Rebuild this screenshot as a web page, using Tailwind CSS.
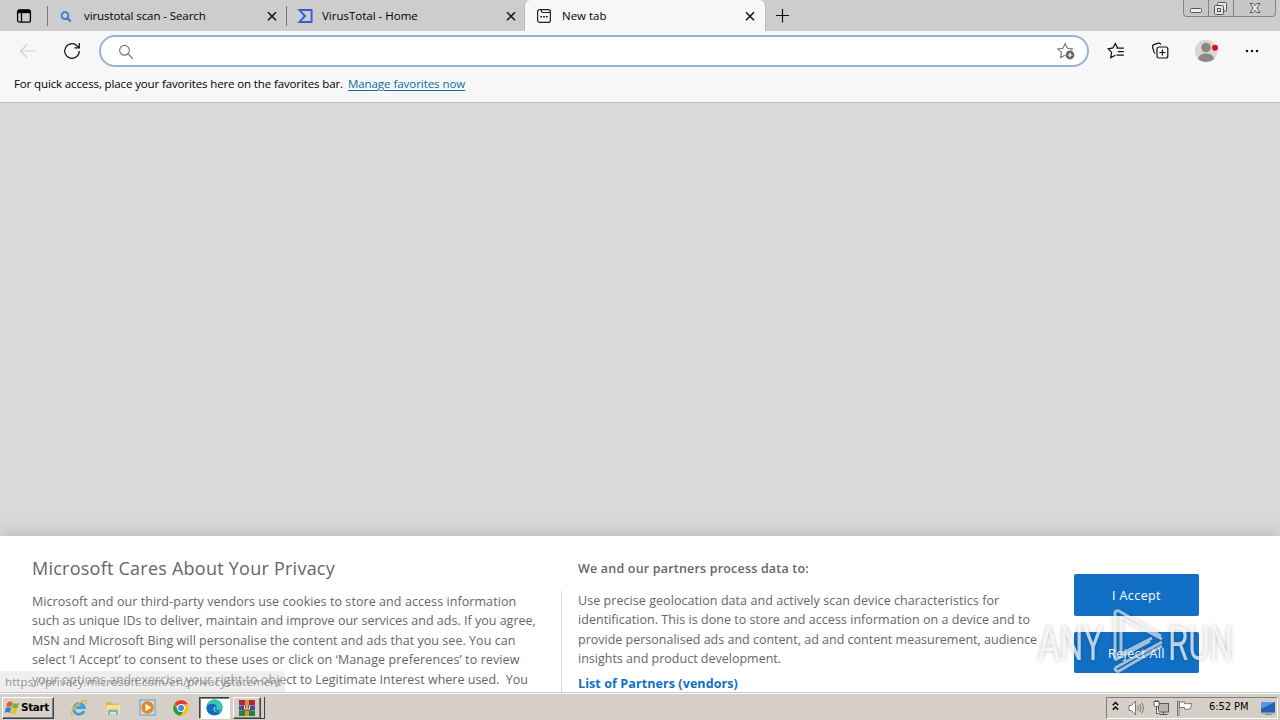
<!DOCTYPE html>
<html lang="en">
<head>
  <meta charset="UTF-8" />
  <meta name="viewport" content="width=device-width, initial-scale=1.0" />
  <title>New tab</title>
  <script src="https://cdn.jsdelivr.net/npm/@tailwindcss/browser@4"></script>
</head>
<body class="w-[1280px] h-[720px] overflow-hidden bg-[#d9d9d9] text-black font-['Open_Sans','Noto_Sans',sans-serif] flex flex-col relative">

  <!-- Tab strip -->
  <header class="h-[31px] shrink-0 bg-[#cdcdcd] flex text-[11.5px] leading-[31px] whitespace-nowrap">
    <div class="w-[47px] pl-4 pt-2">
      <svg class="w-4 h-4" viewBox="0 0 16 16" fill="none" stroke="#000" stroke-width="1.3"><rect x="1.6" y="1.8" width="12.8" height="12.4" rx="2"/><path d="M2 3.5h12" stroke-width="3.4"/><path d="M5.5 4v10"/></svg>
    </div>
    <div class="w-px h-5 mt-1.5 bg-[#777]"></div>
    <div class="w-[238px] flex items-center pl-3 pr-[9px]">
      <svg class="w-3 h-3 mt-0.5" viewBox="0 0 12 12" fill="none" stroke="#2d7dcc" stroke-width="1.8"><circle cx="5" cy="4.6" r="3.4"/><path d="M7.5 7.2l3.2 3.3" stroke-width="2.2"/></svg>
      <span class="ml-3 tracking-[-0.09px]">virustotal scan - Search</span>
      <svg class="w-2.5 h-2.5 ml-auto" viewBox="0 0 10 10" stroke="#111" stroke-width="1.5"><path d="M1 1.2l8 8M9 1.2l-8 8"/></svg>
    </div>
    <div class="w-px h-5 mt-1.5 bg-[#777]"></div>
    <div class="w-[237px] flex items-center pl-2.5 pr-2">
      <svg class="w-4 h-4" viewBox="0 0 16 16" fill="none" stroke="#3e5bd0" stroke-width="1.9"><path d="M2.4 2h12.2v12H2.4L8 8z"/></svg>
      <span class="ml-[9px]">VirusTotal - Home</span>
      <svg class="w-2.5 h-2.5 ml-auto" viewBox="0 0 10 10" stroke="#111" stroke-width="1.5"><path d="M1 1.2l8 8M9 1.2l-8 8"/></svg>
    </div>
    <div class="w-[242px] bg-[#f7f7f7] rounded-t-md border-x border-[#bdbdbd] flex items-center pl-[11px] pr-2.5">
      <svg class="w-4 h-4" viewBox="0 0 16 16" fill="none" stroke="#222" stroke-width="1.2"><rect x="1.6" y="1.6" width="12.8" height="12.8" rx="2.2"/><path d="M5.500 2v1.2q0 1.3 1.3 1.3H14"/><path d="M4.3 8.8h1.8M7.1 8.8h1.8M9.9 8.8h1.8" stroke-width="1.5"/></svg>
      <span class="ml-2.5">New tab</span>
      <svg class="w-2.5 h-2.5 ml-auto" viewBox="0 0 10 10" stroke="#111" stroke-width="1.5"><path d="M1 1.2l8 8M9 1.2l-8 8"/></svg>
    </div>
    <svg class="w-[15px] h-[15px] ml-[9px] mt-2" viewBox="0 0 15 15" stroke="#111" stroke-width="1.2"><path d="M7.5 1v13.500M1 7.500h13"/></svg>
    <!-- Window buttons -->
    <div class="ml-auto mr-1 w-[93px] h-[17px] rounded-b border border-t-0 border-[#858585] bg-[#c7c7c7] flex">
      <div class="w-[25px] border-r border-[#858585] pl-1.5 pt-2"><svg class="w-3 h-[5px]" viewBox="0 0 12 5"><rect x=".5" y=".5" width="11" height="4" rx="1" fill="#eee" stroke="#555"/></svg></div>
      <div class="w-[25px] border-r border-[#858585] pl-[5px] pt-0.5"><svg class="w-[13px] h-[13px]" viewBox="0 0 13 13" fill="#e6e6e6" stroke="#555"><rect x="3.500" y=".5" width="9" height="8.500" rx="1"/><rect x=".5" y="3.500" width="9" height="9" rx="1"/><rect x="3.500" y="6.500" width="3" height="3"/></svg></div>
      <div class="grow pl-[15px] pt-[3px]"><svg class="w-3 h-2.5" viewBox="0 0 12 10"><path d="M1 .5h3l2 2.300 2-2.300h3L7.800 5 11 9.500H8L6 7.200 4 9.500H1L4.200 5z" fill="#eee" stroke="#555"/></svg></div>
    </div>
  </header>

  <!-- Toolbar -->
  <div class="h-10 shrink-0 bg-[#f7f7f7] flex items-center">
    <svg class="w-[18px] h-4 ml-[19px]" viewBox="0 0 18 16" fill="none" stroke="#d0d0d0" stroke-width="1.1"><path d="M17 8H1.500M8 1.500L1.500 8 8 14.500"/></svg>
    <svg class="w-[18px] h-[18px] ml-[26px]" viewBox="0 0 18 18" fill="none" stroke="#111" stroke-width="1.2"><path d="M16.300 9A7.300 7.300 0 1 1 14 3.700L16 5.500"/><path d="M16.300 1v4.800h-4.800"/></svg>
    <div class="ml-[18px] w-[990px] h-8 rounded-full border-2 border-[#98b1dc] bg-white flex items-center pl-4 pr-3">
      <svg class="w-[17px] h-[17px]" viewBox="0 0 17 17" fill="none" stroke="#777" stroke-width="1.2"><circle cx="7.500" cy="7.300" r="4.900"/><path d="M11 10.800l4.600 4.700"/></svg>
      <svg class="w-[18px] h-[18px] ml-auto" viewBox="0 0 18 18"><path d="M8.200 1.500l2.200 4.700 5.100.7-3.700 3.500.9 5.200-4.500-2.500-4.600 2.500.9-5.200L.8 6.900l5.100-.7z" fill="none" stroke="#777" stroke-width="1.100"/><circle cx="13" cy="13" r="5" fill="#fff"/><circle cx="13" cy="13" r="4.400" fill="#666"/><path d="M10.700 13h4.600M13 10.700v4.600" stroke="#fff" stroke-width="1.200"/></svg>
    </div>
    <svg class="w-[18px] h-[18px] ml-[18px]" viewBox="0 0 18 18" fill="none" stroke="#111" stroke-width="1.200"><path d="M10.600 5.900L8.300 1.500 6 5.900 1.200 6.800l3.400 3.600-.8 5.200 4.600-2.300M9.500 6.200h7.300M10.700 9.700h6.100M9.500 13.200h7.300"/></svg>
    <svg class="w-[18px] h-[18px] ml-[26px]" viewBox="0 0 18 18" fill="none" stroke="#111" stroke-width="1.200"><path d="M4.200 11.500q-.8-.4-1.200-1.600L1.500 5q-.5-1.800 1.200-2.400L7.500 1.200q1.600-.4 2.400 1.300"/><rect x="6" y="5" width="10.800" height="11" rx="2"/><path d="M11.400 7.500v6M8.400 10.500h6"/></svg>
    <svg class="w-6 h-6 ml-[25px]" viewBox="0 0 24 24"><circle cx="12" cy="12" r="11.300" fill="#d8d8d5"/><circle cx="12" cy="8.500" r="4.800" fill="#8c8783"/><path d="M4 20q1-5.500 8-5.500t8 5.500q-3.500 3-8 3t-8-3z" fill="#8c8783"/><circle cx="21" cy="8.800" r="3" fill="#dc0d18"/></svg>
    <svg class="w-3.5 h-1 ml-[27px]" viewBox="0 0 14 4" fill="#111"><circle cx="2" cy="2" r="1.250"/><circle cx="7" cy="2" r="1.250"/><circle cx="12" cy="2" r="1.250"/></svg>
  </div>

  <!-- Favorites bar -->
  <div class="h-8 shrink-0 bg-[#f7f7f7] border-b border-[#c4c4c4] pl-3.5 flex text-[11.5px] leading-[26px] whitespace-nowrap">
    <span class="tracking-[-0.125px]">For quick access, place your favorites here on the favorites bar.</span>
    <a class="ml-[5px] tracking-[-0.05px] text-[#0a6ca3] underline underline-offset-2">Manage favorites now</a>
  </div>

  <main class="grow"></main>

  <!-- Privacy banner -->
  <section class="h-[156px] shrink-0 relative bg-white shadow-[0_0_18px_rgba(0,0,0,0.2)] flex text-[#666] text-[12.5px] leading-[19.5px] whitespace-nowrap overflow-y-clip">
    <div class="w-[561px] pl-8 pt-5">
      <h2 class="text-[18px] leading-6 tracking-[0.24px]">Microsoft Cares About Your Privacy</h2>
      <p class="mt-[11.5px]">
        <span class="block tracking-[0.07px]">Microsoft and our third-party vendors use cookies to store and access information</span>
        <span class="block tracking-[0.01px]">such as unique IDs to deliver, maintain and improve our services and ads. If you agree,</span>
        <span class="block tracking-[0.04px]">MSN and Microsoft Bing will personalise the content and ads that you see. You can</span>
        <span class="block tracking-[0.11px]">select ‘I Accept’ to consent to these uses or click on ‘Manage preferences’ to review</span>
        <span class="block">your options and exercise your right to object to Legitimate Interest where used.&nbsp; You</span>
      </p>
    </div>
    <div class="w-[513px] mt-[55px] border-l border-[#d8d8d8] pl-4">
      <h3 class="-mt-8 font-semibold tracking-[0.19px]">We and our partners process data to:</h3>
      <p class="mt-3">
        <span class="block tracking-[0.06px]">Use precise geolocation data and actively scan device characteristics for</span>
        <span class="block tracking-[0.04px]">identification. This is done to store and access information on a device and to</span>
        <span class="block">provide personalised ads and content, ad and content measurement, audience</span>
        <span class="block">insights and product development.</span>
      </p>
      <a class="block mt-[5px] font-bold tracking-[0.09px] text-[#1170c5]">List of Partners (vendors)</a>
    </div>
    <div class="pt-[38px] flex flex-col gap-4 text-white text-[12.5px] tracking-[0.4px]">
      <button class="w-[125px] h-[42px] pt-0.5 rounded-xs bg-[#1170c5]">I Accept</button>
      <button class="w-[125px] h-[41px] pt-0.5 rounded-xs bg-[#1170c5]">Reject All</button>
    </div>
  </section>

  <!-- Link status -->
  <div class="absolute left-0 top-[671px] w-[285px] h-[21px] bg-[#dcdcdc]/45 rounded-tr pl-[5px] text-[11.5px] leading-[22px] tracking-[0.09px] text-[#777]/80 whitespace-nowrap">https://privacy.microsoft.com/en/privacystatement</div>

  <!-- Watermark -->
  <svg class="absolute left-[1034px] top-[604px] w-[210px] h-[74px] overflow-visible drop-shadow-[0_0_2px_rgba(0,0,0,0.35)]" viewBox="0 0 210 74" fill="none" stroke="#fff" stroke-opacity=".6">
    <g fill="#fff" fill-opacity=".72" stroke="none" font-family="Roboto" font-size="49">
      <text x="4" y="56" textLength="65" lengthAdjust="spacingAndGlyphs">ANY</text>
      <text x="134" y="56" textLength="65" lengthAdjust="spacingAndGlyphs">RUN</text>
    </g>
    <path d="M81 9v47M87 13v37M81 9q0-3 4-2l42 25M87 13l41 22M87 50l31-16M81 64l47-26M81 64q0 4 4 3l43-25M81 56l35-19" stroke-width="3" stroke-linejoin="round"/>
  </svg>

  <!-- Taskbar -->
  <footer class="h-7 shrink-0 relative bg-[#d6cfc7] border-t border-[#c9c9bd] shadow-[inset_0_1px_0_#fff] flex items-center">
    <div class="ml-0.5 mt-0.5 w-[52px] h-[22px] bg-[#d6d1c9] border border-t-white border-l-white border-r-[#404040] border-b-[#404040] shadow-[inset_-1px_-1px_0_#808080] flex items-center font-['DejaVu_Sans',sans-serif] font-bold text-[10.5px] tracking-[-0.4px]">
      <svg class="w-4 h-4 ml-px mr-px" viewBox="0 0 16 16"><path d="M3.500 2.500q3-2 5 0L7.300 7.300q-2.500-1.800-5.200 0z" fill="#e95d2b"/><path d="M9.200 3q2.800 1.500 6 0l-1.600 5q-3 1.400-5.600-.3z" fill="#70b83b"/><path d="M2 8q2.800-1.700 5.100.2L5.800 13q-2.300-1.800-5.100 0z" fill="#2e7fd6"/><path d="M7.900 8.600q2.700 1.600 5.500.2L12 13.800q-3 1.200-5.400-.5z" fill="#f6bd20"/></svg>
      Start
    </div>
    <!-- Internet Explorer -->
    <svg class="w-[18px] h-[18px] ml-4 mt-0.5" viewBox="0 0 18 18" fill="none"><path d="M14 12.200A5.400 5.400 0 1 1 14.300 8.500H6" stroke="#3a9fe0" stroke-width="2.800"/><path d="M3 15.800Q-.5 17 2 12 6 5 13 2q4.500-1.600 3.300 2.500" stroke="#e9b832" stroke-width="1.400"/></svg>
    <!-- Explorer -->
    <svg class="w-[18px] h-[18px] ml-4 mt-0.5" viewBox="0 0 18 18"><path d="M2 3h5l1.200 1.500H14V13H2z" fill="#ddb84c"/><path d="M2.500 6H16v9H2.500z" fill="#f7e28f"/><path d="M4 16v-4q0-1.500 1.500-1.500h7Q14 10.500 14 12v4h-2v-3H6v3z" fill="#67b8e4"/></svg>
    <!-- Media player -->
    <svg class="w-[17px] h-[17px] ml-[17px] mt-0.5" viewBox="0 0 17 17"><rect x="1" y="1" width="15" height="15" fill="#c9e0f0" stroke="#5a9bcb"/><circle cx="8.500" cy="8.500" r="6.200" fill="#ee8213"/><path d="M6.500 4.700l6 3.800-6 3.800z" fill="#fff"/></svg>
    <!-- Chrome -->
    <svg class="w-4 h-4 ml-[17px] mt-0.5" viewBox="0 0 16 16"><circle cx="8" cy="8" r="7.800" fill="#fbc116"/><path d="M8 8L1.200 4.200A7.800 7.800 0 0 1 14.900 4.300H8z" fill="#e33b2e"/><path d="M1.200 4.200A7.800 7.800 0 0 0 7.500 15.800L11 10 8 8 5 9.800z" fill="#229a4b"/><circle cx="8" cy="8" r="3.900" fill="#fff"/><circle cx="8" cy="8" r="3" fill="#4285f4"/></svg>
    <!-- Edge -->
    <div class="ml-[10px] mt-0.5 w-[31px] h-[22px] bg-white border border-t-[#404040] border-l-[#404040] border-r-white border-b-white shadow-[inset_1px_1px_0_#808080] flex items-center justify-center">
      <svg class="w-[17px] h-[17px]" viewBox="0 0 17 17"><circle cx="8.500" cy="8.500" r="8" fill="#1478c8"/><path d="M.6 8A8 8 0 0 1 16.500 7.500q.3 3.500-3.500 3.700-3.300 0-2.300-2Q11 5 6.600 5 2 5 .6 8z" fill="#38c6b1"/><path d="M.6 8Q2 5 6 5q3 0 4.500 2-4-.5-4.500 3 0 4 5 4.500-4 2.500-7.500.2Q.3 12.500.6 8z" fill="#126bb5"/><path d="M10.700 7.500q-3 1.500-2 4 2 3 7 .5-1 1.300-3 1.300-5 0-5-3.300Q8 7.500 10.700 7.500z" fill="#fff"/></svg>
    </div>
    <!-- WinRAR, grouped windows -->
    <div class="ml-[3px] mt-0.5 w-[28px] h-[22px] border border-t-white border-l-white border-r-[#404040] border-b-[#404040] shadow-[inset_-1px_-1px_0_#808080] flex items-center justify-center">
      <svg class="w-4 h-4" viewBox="0 0 16 16"><path d="M0 0h16v5H0z" fill="#b12638"/><path d="M0 5.500h16v5H0z" fill="#3353b5"/><path d="M0 11h16v5H0z" fill="#27813d"/><path d="M6 0h4v16H6z" fill="#d19531"/><path d="M3.500 5.500h9v5h-9z" fill="#713322"/><path d="M5.500 5.500v3.500h5V5.500M8 5v4" fill="none" stroke="#eee" stroke-width="1.200"/></svg>
    </div>
    <div class="mt-0.5 w-[4px] h-[22px] border-r border-b border-[#404040]"></div>

    <!-- Tray -->
    <div class="ml-auto mr-0.5 mt-0.5 w-[172px] h-[22px] border border-t-[#808080] border-l-[#808080] border-r-white border-b-white flex items-center font-['DejaVu_Sans_Condensed','DejaVu_Sans',sans-serif] text-[11px]">
      <svg class="w-[7px] h-2.5 ml-[5px] -mt-1" viewBox="0 0 7 10" fill="none" stroke="#000" stroke-width="1.400"><path d="M.8 4.300l2.700-2.800 2.700 2.800M.8 8.800L3.500 6l2.700 2.800"/></svg>
      <svg class="w-[17px] h-4 ml-[9px]" viewBox="0 0 17 16" fill="none" stroke="#777"><path d="M1 5.500h2.500L7.500 1v14l-4-4.500H1z" fill="#fff"/><path d="M9.500 5.500q1.500 2.500 0 5M11.700 4q2.500 4 0 8M13.700 2.500q3.500 5.500 0 11"/></svg>
      <svg class="w-4 h-4 ml-[8px]" viewBox="0 0 16 16" fill="none" stroke="#555"><rect x="5.500" y="3.500" width="10" height="8.500" fill="#b5b5b5"/><path d="M6.500 14.500h8M10.500 12v2.500"/><path d="M1 1.500h5V5q0 1.500-1.500 1.500h-2Q1 6.500 1 5zM2.500 0v2M4.500 0v2M3.500 6.500v7h3" fill="#fff"/></svg>
      <svg class="w-4 h-4 ml-[8px]" viewBox="0 0 16 16" fill="#fff" stroke="#777"><path d="M.5 1v14.500h1.500V1zM2.500 2h5v1.700h7.500l-2 5.500H7.500V7.500h-5z"/></svg>
      <span class="ml-[16px] tracking-[-0.05px] whitespace-nowrap">6:52 PM</span>
      <svg class="w-4 h-4 ml-auto mr-px" viewBox="0 0 16 16"><path d="M1 2h14v10.500H1z" fill="#2462b4"/><path d="M1 2h14L1 9z" fill="#5999df"/><path d="M1 12h14v1.500H1z" fill="#6f8fae"/><path d="M5 14.500h7" stroke="#888"/></svg>
    </div>
  </footer>
</body>
</html>
